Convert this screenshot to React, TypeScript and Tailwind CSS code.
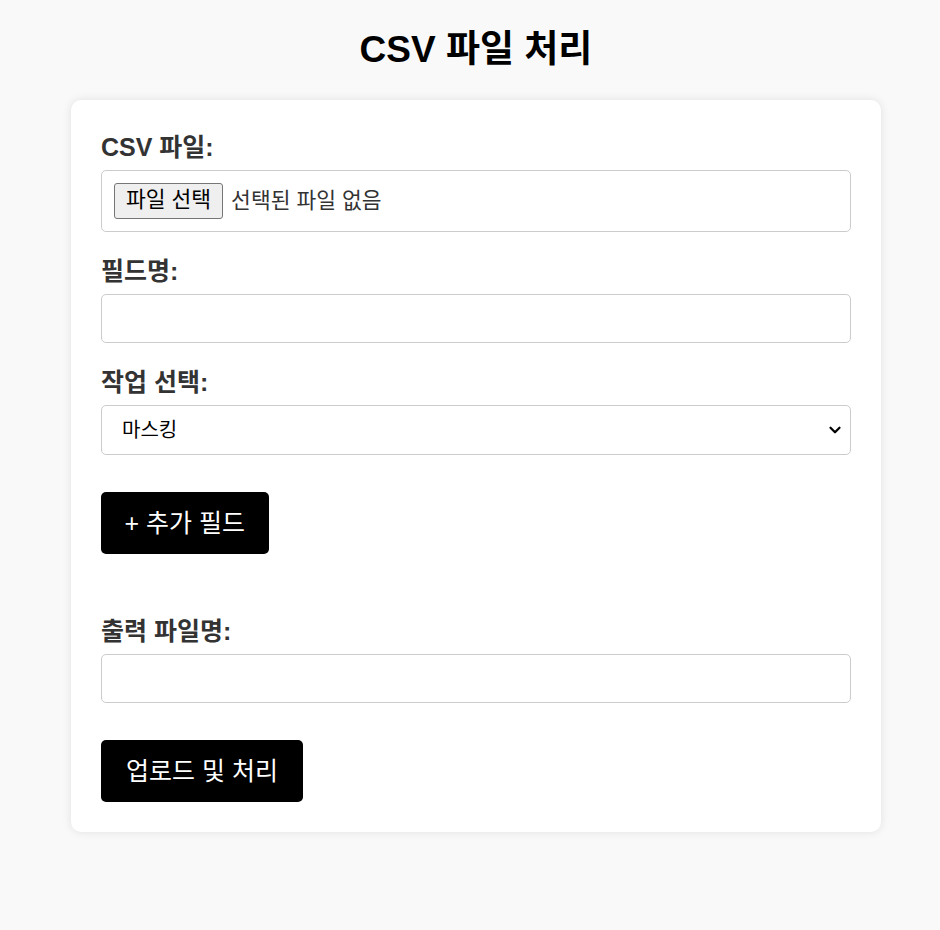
import { ChevronDown } from 'lucide-react'

const font = { fontFamily: '"Liberation Sans", "Noto Sans CJK KR", sans-serif' }

function Label({ children }: { children: React.ReactNode }) {
  return <label className="block text-[25px] leading-[34px] font-bold text-[#333] mb-[6px]">{children}</label>
}

export default function App() {
  return (
    <div className="min-h-screen bg-[#f9f9f9] pt-[30px] pb-[98px]" style={font}>
      <div className="w-[810px] ml-[71px]">
        <h1 className="text-center text-[37px] leading-[40px] font-bold text-black mb-[30px]">CSV 파일 처리</h1>

        <div className="bg-white rounded-[10px] shadow-[0_0_10px_rgba(0,0,0,0.1)] p-[30px]">
          <Label>CSV 파일:</Label>
          <div className="h-[62px] border border-[#ccc] rounded-[5px] px-[12px] flex items-center gap-[8px]">
            <button className="h-[36px] px-[11px] bg-[#efefef] border border-[#767676] rounded-[3px] text-[21.5px] leading-none text-black">
              파일 선택
            </button>
            <span className="text-[21.5px] text-[#333]">선택된 파일 없음</span>
          </div>

          <div className="mt-[22px]">
            <Label>필드명:</Label>
            <input type="text" className="block w-full h-[49px] border border-[#ccc] rounded-[5px] px-[12px] text-[21px] outline-none" />
          </div>

          <div className="mt-[22px]">
            <Label>작업 선택:</Label>
            <div className="relative">
              <select className="block w-full h-[50px] border border-[#ccc] rounded-[5px] pl-[20px] pr-[40px] text-[20px] text-black bg-white appearance-none outline-none">
                <option>마스킹</option>
                <option>암호화</option>
              </select>
              <ChevronDown className="absolute right-[7px] top-[16px] w-[18px] h-[18px] text-black pointer-events-none" strokeWidth={3} />
            </div>
          </div>

          <button className="mt-[37px] h-[62px] px-[23.5px] bg-black text-white text-[25px] leading-none rounded-[5px]">
            + 추가 필드
          </button>

          <div className="mt-[60px]">
            <Label>출력 파일명:</Label>
            <input type="text" className="block w-full h-[49px] border border-[#ccc] rounded-[5px] px-[12px] text-[21px] outline-none" />
          </div>

          <button className="block mt-[37px] h-[62px] px-[25px] bg-black text-white text-[25px] leading-none rounded-[5px]">
            업로드 및 처리
          </button>
        </div>
      </div>
    </div>
  )
}
